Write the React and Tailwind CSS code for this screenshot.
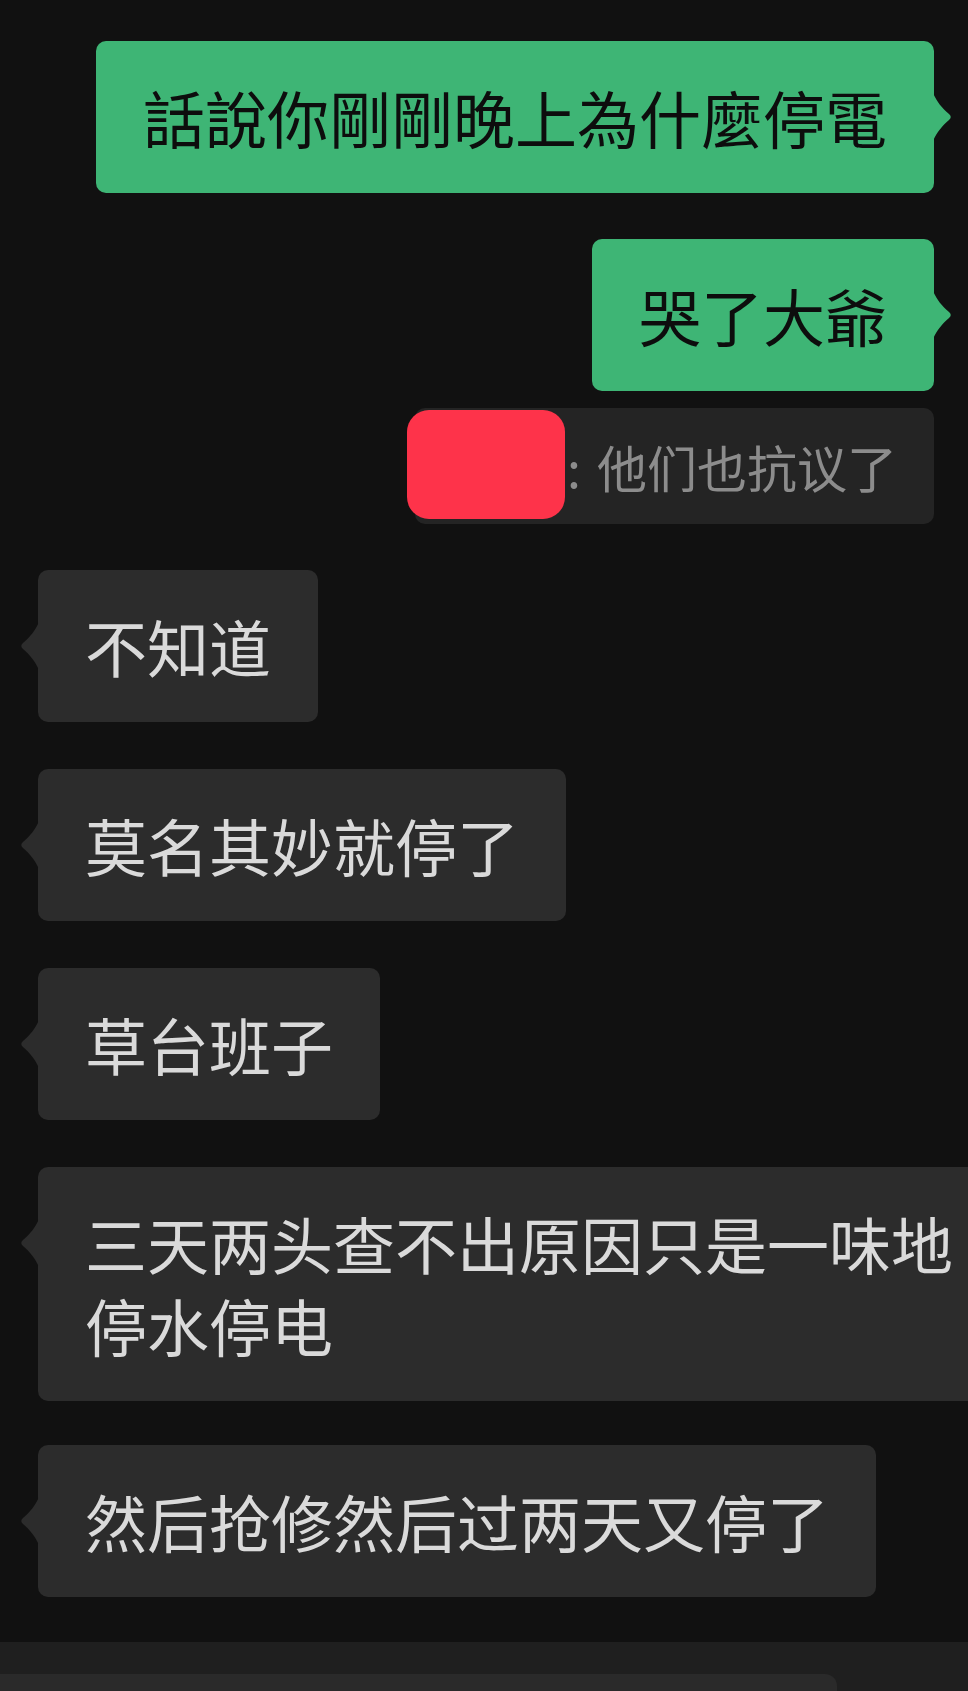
import React from 'react';

const TC = { fontFamily: '"Noto Sans CJK TC", "Noto Sans CJK SC", sans-serif' };
const SC = { fontFamily: '"Noto Sans CJK SC", "Noto Sans CJK TC", sans-serif' };

function Tail({ side, color }) {
  const flip = side === 'left';
  return (
    <svg
      width="20"
      height="48"
      viewBox="0 0 20 48"
      className={flip ? 'absolute -left-[19px] top-[52px]' : 'absolute -right-[19px] top-[52px]'}
      style={flip ? { transform: 'scaleX(-1)' } : undefined}
    >
      <path d="M0 0 C4 9 9 15 16 21 Q19.5 24 16 27 C9 33 4 39 0 48 Z" fill={color} />
    </svg>
  );
}

function MyBubble({ text, font }) {
  return (
    <div className="flex justify-end pr-[34px]">
      <div className="relative rounded-[10px] bg-[#3eb575] px-[47px] py-[35px] text-[62px] leading-[82px] text-[#0d0d0d]" style={font}>
        {text}
        <Tail side="right" color="#3eb575" />
      </div>
    </div>
  );
}

function TheirBubble({ text }) {
  return (
    <div className="flex justify-start pl-[38px]">
      <div className="relative max-w-[966px] shrink-0 rounded-[10px] bg-[#2c2c2c] px-[47px] py-[35px] text-[62px] leading-[82px] text-[#dadada]" style={SC}>
        {text}
        <Tail side="left" color="#2c2c2c" />
      </div>
    </div>
  );
}

function QuoteLine() {
  return (
    <div className="flex justify-end pr-[34px]">
      <div className="flex h-[116px] items-start rounded-[10px] bg-[#242424] pr-[37px]" style={SC}>
        <div className="-ml-[8px] mt-[2px] h-[109px] w-[158px] rounded-[22px] bg-[#fe334a]" />
        <div className="flex h-full items-center pl-[2px] text-[50px] leading-none text-[#8c8c8c]">
          <span className="mr-[16px]">:</span>
          <span>他们也抗议了</span>
        </div>
      </div>
    </div>
  );
}

export default function App() {
  return (
    <div className="flex h-[1691px] w-full flex-col overflow-hidden bg-[#111111]">
      <div className="flex flex-col pt-[41px]">
        <MyBubble text="話說你剛剛晚上為什麼停電" font={TC} />
        <div className="mt-[46px]">
          <MyBubble text="哭了大爺" font={TC} />
        </div>
        <div className="mt-[17px]">
          <QuoteLine />
        </div>
        <div className="mt-[46px]">
          <TheirBubble text="不知道" />
        </div>
        <div className="mt-[47px]">
          <TheirBubble text="莫名其妙就停了" />
        </div>
        <div className="mt-[47px]">
          <TheirBubble text="草台班子" />
        </div>
        <div className="mt-[47px]">
          <TheirBubble text="三天两头查不出原因只是一味地停水停电" />
        </div>
        <div className="mt-[44px]">
          <TheirBubble text="然后抢修然后过两天又停了" />
        </div>
      </div>
      <div className="mt-auto h-[49px] bg-[#1f1f1f] pt-[32px]">
        <div className="h-full w-[837px] rounded-tr-[12px] bg-[#2a2a2a]" />
      </div>
    </div>
  );
}
